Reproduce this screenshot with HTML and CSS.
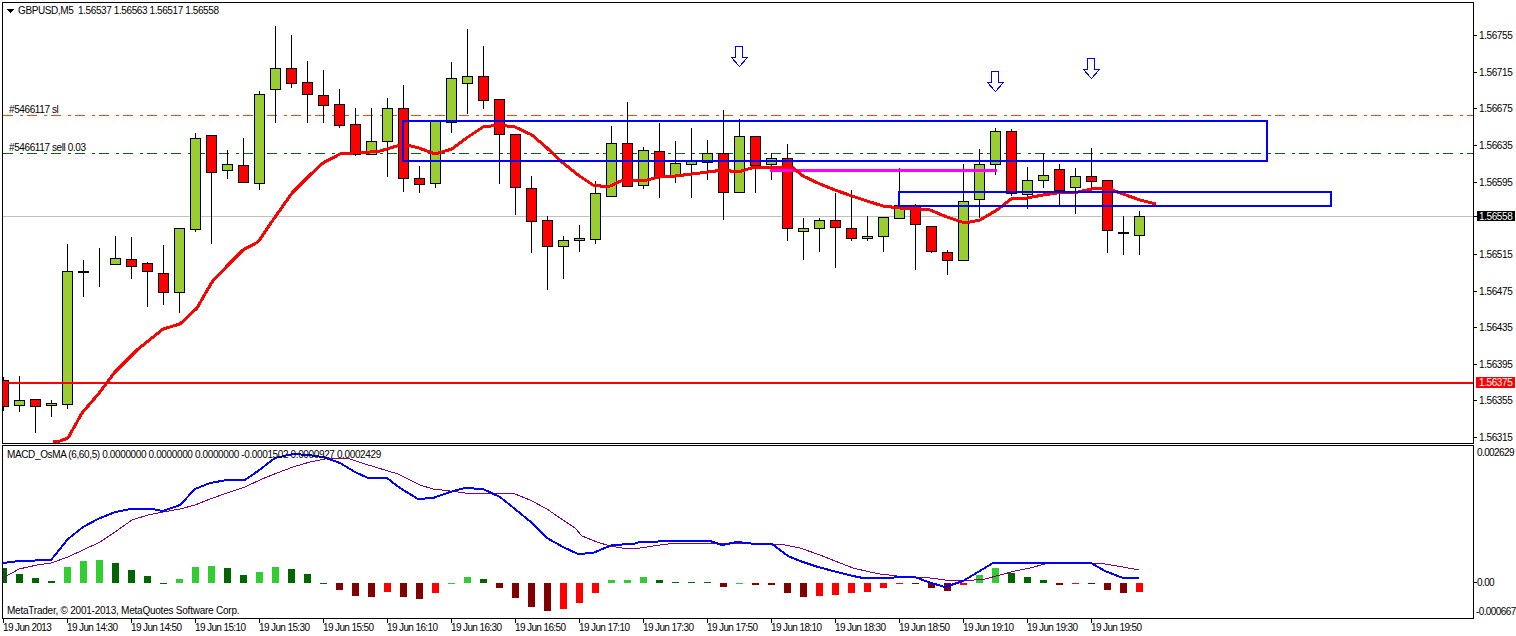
FILE: index.html
```html
<!DOCTYPE html>
<html lang="en">
<head>
    <meta charset="UTF-8">
    <title>GBPUSD,M5</title>
    <link rel="stylesheet" href="styles.css">
</head>
<body>
    <div class="terminal">
        <div class="chart-row main-row">
            <div class="plot"><svg id="mainPlot" viewBox="3 3 1470 440" width="1470" height="440"></svg></div>
            <svg id="mainAxis" class="price-axis" viewBox="1474 2 42 442" width="42" height="442"></svg>
        </div>
        <div class="chart-row sub-row">
            <div class="plot"><svg id="subPlot" viewBox="3 446 1470 172" width="1470" height="172"></svg></div>
            <svg id="subAxis" class="price-axis" viewBox="1474 445 42 174" width="42" height="174"></svg>
        </div>
        <svg id="timeAxis" class="time-axis" viewBox="0 619 1516 17" width="1516" height="17"></svg>
    </div>
    <script src="chart.js"></script>
</body>
</html>
```
FILE: styles.css
```css
html, body {
    margin: 0;
    padding: 0;
    background-color: #fff;
    overflow: hidden;
}
.terminal {
    width: 1516px;
    height: 636px;
    padding-top: 2px;
    box-sizing: border-box;
    display: flex;
    flex-direction: column;
}
.chart-row {
    display: flex;
    padding-left: 2px;
}
.sub-row {
    margin-top: 1px;
}
.plot {
    border: 1px solid #000;
    line-height: 0;
}
svg {
    display: block;
    shape-rendering: crispEdges;
}
text {
    font-family: "Liberation Sans", Arial, sans-serif;
    font-size: 10px;
    letter-spacing: -0.4px;
    fill: #000;
}
.on-box {
    fill: #fff;
}
.wide-text {
    letter-spacing: -0.23px;
}
.macd-title {
    letter-spacing: -0.37px;
}
#subAxis text {
    letter-spacing: -0.6px;
}
#timeAxis text {
    letter-spacing: -0.62px;
}
.wick { fill: #000; }
.body { stroke: #000; stroke-width: 1; }
.up { fill: #9acd32; }
.down { fill: #f00; }
.level-sl, .level-sell {
    fill: none;
    stroke-width: 1;
    stroke-dasharray: 10 7 3 4;
}
.level-sl { stroke: #ff4500; }
.level-sell { stroke: #006400; }
.bid { fill: #c0c0c0; }
.ma, .macd, .signal { fill: none; stroke-linejoin: round; }
.ma { stroke: #f00; stroke-width: 3; }
.zone { fill: none; stroke: #00f; stroke-width: 2; }
.trend { fill: #f0f; }
.alert { fill: #f00; }
.arrow { fill: #fff; stroke: #00f; stroke-width: 1; }
.macd { stroke: #00f; stroke-width: 2; }
.signal { stroke: #800080; stroke-width: 1; }
.h1 { fill: #32cd32; }
.h2 { fill: #006400; }
.h3 { fill: #800000; }
.h4 { fill: #f00; }
```
FILE: chart.js
```js
// candles: [colour, body top, body bottom, high, low] in pixels
const candles = [
    ["r",380,406,377,410],["g",400,405,376,411],["r",399,406,399,432],["g",403,405,400,416],
    ["g",271,404,244,408],["g",271,272,260,296],["g",268,268,248,286],["g",258,264,236,264],
    ["r",259,266,237,278],["r",263,271,262,306],["r",273,292,245,304],["g",228,292,228,312],
    ["g",138,229,133,231],["r",135,172,135,243],["g",164,170,150,178],["r",165,182,138,182],
    ["g",94,183,91,189],["g",68,89,26,122],["r",68,83,35,87],["r",82,94,61,122],
    ["r",95,105,70,122],["r",104,125,89,127],["r",124,154,108,155],["g",141,154,108,154],
    ["g",108,141,98,176],["r",108,178,85,191],["r",178,184,166,192],["g",120,183,120,187],
    ["g",78,122,62,132],["g",76,83,29,113],["r",76,100,46,108],["r",99,134,99,183],
    ["r",134,187,134,214],["r",188,221,176,252],["r",220,246,216,289],["g",240,246,236,278],
    ["g",238,240,225,251],["g",193,239,181,243],["g",143,196,126,196],["r",143,186,102,186],
    ["g",150,185,147,188],["r",151,176,123,197],["g",163,176,141,182],["g",160,164,128,197],
    ["g",153,162,140,179],["r",153,192,110,219],["g",136,192,119,192],["r",136,165,136,192],
    ["g",158,164,153,179],["r",158,228,144,240],["g",228,231,218,259],["g",220,228,218,251],
    ["r",220,227,193,267],["r",228,238,190,240],["g",236,238,216,240],["g",217,236,217,251],
    ["g",205,218,168,218],["r",205,224,204,269],["r",226,251,226,252],["r",252,260,250,274],
    ["g",201,260,164,260],["g",164,199,149,217],["g",131,164,128,174],["r",131,193,129,195],
    ["g",180,194,167,208],["g",175,180,153,187],["r",169,190,164,204],["g",176,187,168,213],
    ["r",176,181,148,188],["r",180,230,180,252],["g",232,233,216,254],["g",216,235,211,254]
];

const maLine = "53,442 60,441 68,438 82,413 100,392 115,372 137,350 147,342 163,329 180,324 197,308 212,282 228,265 243,250 258,242 273,220 292,193 310,175 323,163 340,154 353,153 370,152 380,151 397,146 403,144 419,148 435,154 452,149 468,137 483,127 499,125 515,127 532,135 547,148 562,162 578,175 593,185 608,187 623,180 643,181 663,176 675,176 692,174 708,172 723,170 738,172 755,167 777,167 792,167 803,176 820,184 835,190 852,196 867,201 883,206 900,208 915,209 930,210 947,217 965,223 980,220 997,210 1011,199 1027,198 1043,195 1057,193 1078,192 1092,189 1107,188 1123,194 1140,200 1156,204";

const macdLine = "3,563 19,561 51,560 68,539 83,527 98,519 115,512 131,509 152,509 163,511 180,505 195,489 210,483 227,480 245,480 258,471 275,458 293,454 308,455 323,457 340,463 355,472 368,478 387,478 400,488 418,499 433,498 450,492 465,488 483,489 500,497 515,509 532,523 547,538 563,547 578,554 593,553 612,545 633,544 640,542 677,541 710,541 722,545 737,542 755,544 772,544 788,556 800,561 818,567 837,572 853,576 863,578 891,578 897,577 915,577 928,582 945,587 963,581 978,572 993,563 1091,563 1105,571 1123,578 1139,578";

const signalLine = "3,578 19,569 37,565 51,563 68,557 83,550 100,542 115,532 132,520 148,515 163,512 180,509 195,505 210,499 227,493 245,487 262,479 277,473 293,467 310,462 330,458 347,458 365,464 398,474 420,485 433,489 450,491 465,493 500,493 515,494 530,500 547,509 560,518 575,528 582,536 597,542 610,546 622,548 640,548 660,545 677,543 715,543 752,543 772,544 785,545 800,548 820,555 835,561 853,568 870,572 880,574 897,576 915,577 930,578 945,580 963,581 985,579 1000,575 1015,571 1030,568 1045,564 1060,563 1091,563 1105,564 1123,567 1139,570";

// histogram: [kind, height above (+) or below (-) zero]; 1 light green, 2 dark green, 3 dark red, 4 red
const histogram = [
    [2,15],[2,9],[2,5],[2,2],[1,16],[1,22],[1,23],[2,20],[2,13],[2,7],[2,-1],[1,4],
    [1,16],[1,17],[2,15],[2,8],[1,11],[1,16],[2,14],[2,9],[2,-1],[3,-7],[3,-13],[3,-14],
    [4,-9],[3,-14],[3,-16],[4,-10],[1,-1],[1,6],[2,4],[3,-5],[3,-15],[3,-24],[3,-28],[4,-26],
    [4,-20],[4,-10],[1,3],[1,3],[1,6],[2,3],[2,1],[2,1],[2,1],[3,-4],[1,-1],[3,-2],
    [3,-2],[3,-10],[3,-14],[4,-13],[4,-12],[4,-10],[4,-9],[4,-5],[4,-1],[3,-1],[3,-5],[3,-8],
    [4,-2],[1,8],[1,15],[2,10],[2,6],[2,3],[3,-2],[4,-1],[3,-1],[3,-7],[3,-10],[4,-9]
];

const ZERO_Y = 583;

function slotX(i) {
    return 3 + 16 * i;
}

function rect(cls, x, y, w, h) {
    return `<rect class="${cls}" x="${x}" y="${y}" width="${w}" height="${h}"/>`;
}

function text(cls, x, y, str) {
    return `<text class="${cls}" x="${x}" y="${y}">${str}</text>`;
}

function polyline(cls, points) {
    return `<polyline class="${cls}" points="${points}"/>`;
}

function drawCandle(c, i) {
    const x = slotX(i);
    const cls = c[0] === "g" ? "up" : "down";
    return rect("wick", x, c[3], 1, c[4] - c[3] + 1) +
        `<rect class="body ${cls}" x="${x - 4.5}" y="${c[1] + 0.5}" width="10" height="${c[2] - c[1]}"/>`;
}

function drawArrow(x, y) {
    const pts = [[-4,0],[3,0],[3,11],[8,11],[0,20],[-8,11],[-4,11]];
    const points = pts.map(p => `${x + p[0] + 0.5},${y + p[1] + 0.5}`).join(" ");
    return `<polygon class="arrow" points="${points}"/>`;
}

// main window
document.getElementById("mainPlot").innerHTML =
    rect("bid", 3, 216, 1470, 1) +
    `<line class="level-sl" x1="3" y1="115.5" x2="1473" y2="115.5"/>` +
    `<line class="level-sell" x1="3" y1="153.5" x2="1473" y2="153.5"/>` +
    candles.map(drawCandle).join("") +
    rect("trend", 770, 169, 227, 3) +
    polyline("ma", maLine) +
    rect("zone", 403, 121, 864, 40) +
    rect("zone", 899, 192, 432, 14) +
    rect("alert", 3, 382, 1470, 2) +
    drawArrow(739, 46) + drawArrow(995, 71) + drawArrow(1091, 58) +
    `<polygon points="6,9 14,9 10,13"/>` +
    text("", 18, 14, "GBPUSD,M5 &nbsp;1.56537 1.56563 1.56517 1.56558") +
    text("", 9, 113, "#5466117 sl") +
    text("", 9, 151, "#5466117 sell 0.03");

const prices = [
    [35,"1.56755"],[72,"1.56715"],[108,"1.56675"],[145,"1.56635"],[182,"1.56595"],[254,"1.56515"],
    [291,"1.56475"],[327,"1.56435"],[364,"1.56395"],[400,"1.56355"],[437,"1.56315"]
];
document.getElementById("mainAxis").innerHTML =
    prices.map(p => rect("wick", 1474, p[0], 3, 1) + text("", 1479, p[0] + 4, p[1])).join("") +
    rect("wick", 1474, 216, 3, 1) +
    rect("wick", 1477, 211, 38, 10) + text("on-box", 1479, 220, "1.56558") +
    rect("alert", 1476, 377, 39, 11) + text("on-box", 1479, 386, "1.56375");

// indicator window
document.getElementById("subPlot").innerHTML =
    histogram.map((h, i) => {
        const y = h[1] > 0 ? ZERO_Y - h[1] : ZERO_Y;
        return rect("h" + h[0], slotX(i) - 3, y, 7, Math.abs(h[1]));
    }).join("") +
    polyline("signal", signalLine) +
    polyline("macd", macdLine) +
    text("macd-title", 7, 458, "MACD_OsMA (6,60,5) 0.0000000 0.0000000 0.0000000 -0.0001502 0.0000927 0.0002429") +
    text("wide-text", 7, 614, "MetaTrader, © 2001-2013, MetaQuotes Software Corp.");

document.getElementById("subAxis").innerHTML =
    rect("wick", 1474, 582, 3, 1) +
    text("", 1477, 456, "0.002629") +
    text("", 1477, 586, "0.00") +
    text("", 1476, 615, "-0.000667");

// time scale
const times = ["2013","14:30","14:50","15:10","15:30","15:50","16:10","16:30","16:50","17:10","17:30","17:50","18:10","18:30","18:50","19:10","19:30","19:50"];
document.getElementById("timeAxis").innerHTML =
    times.map((t, i) => {
        const x = 3 + 64 * i;
        return rect("wick", x, 619, 1, 4) + text("", x, 631, "19 Jun " + t);
    }).join("");
```
